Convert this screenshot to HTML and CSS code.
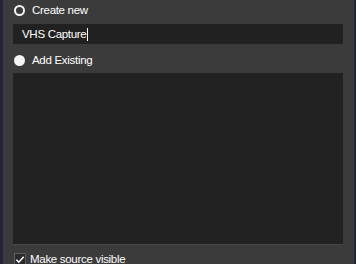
FILE: index.html
```html
<!DOCTYPE html>
<html lang="en">
<head>
    <meta charset="UTF-8">
    <title>Add Source</title>
    <link rel="stylesheet" href="styles.css">
</head>
<body>
    <div class="dialog">
        <label class="option">
            <span class="radio"></span>
            Create new
        </label>

        <div class="name-input">VHS Capture<span class="caret"></span></div>

        <label class="option">
            <span class="radio checked"></span>
            Add Existing
        </label>

        <div class="source-list"></div>

        <label class="visible-row">
            <span class="checkbox">
                <svg width="11" height="11" viewBox="0 0 11 11">
                    <path d="M1.5 5.8 L4.2 8.4 L9.6 2.4" fill="none" stroke="#ffffff" stroke-width="1.6"/>
                </svg>
            </span>
            Make source visible
        </label>
    </div>
</body>
</html>
```

FILE: styles.css
```css
body {
    margin: 0;
    font-family: "Liberation Sans", Arial, sans-serif;
    font-size: 11.5px;
    letter-spacing: -0.3px;
    color: #fefefe;
    background: #22243a;
}
.dialog {
    height: 264px;
    box-sizing: border-box;
    border-left: 3px solid #22243a;
    border-right: 2px solid #22243a;
    background: #3c3b3c;
    padding: 2px 11px 0 10px;
    overflow: hidden;
}
.option {
    display: flex;
    align-items: center;
    gap: 7px;
    height: 16px;
    padding-left: 1px;
}
.radio {
    width: 11px;
    height: 11px;
    box-sizing: border-box;
    border-radius: 50%;
    border: 2px solid #f4f4f4;
    background: #3c3b3c;
}
.radio.checked {
    background: #f4f4f4;
}
.name-input {
    margin: 6px 0 8px;
    height: 20px;
    line-height: 20px;
    padding-left: 9px;
    background: #222122;
    display: flex;
    align-items: center;
}
.caret {
    display: inline-block;
    width: 1px;
    height: 13px;
    margin-left: 1px;
    background: #ffffff;
}
.source-list {
    margin-top: 5px;
    height: 171px;
    background: #232223;
    border-bottom: 1px solid #474647;
}
.visible-row {
    display: flex;
    align-items: center;
    gap: 4px;
    margin-top: 6px;
    height: 16px;
    padding-left: 1px;
}
.checkbox {
    width: 12px;
    height: 12px;
    box-sizing: border-box;
    border: 1px solid #5e5d5e;
    background: #2c2b2c;
    display: flex;
    align-items: center;
    justify-content: center;
}
```
